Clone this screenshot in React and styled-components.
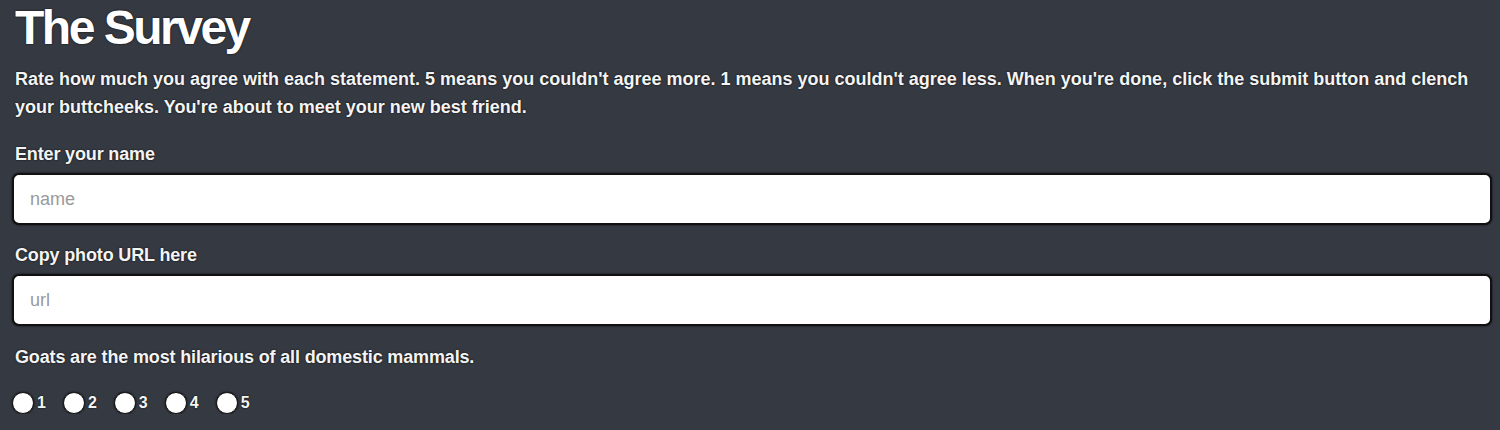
import React from 'react'
import styled, { createGlobalStyle } from 'styled-components'

const GlobalStyle = createGlobalStyle`
  html, body {
    margin: 0;
    padding: 0;
    background-color: #353941;
  }
  body {
    font-family: 'Liberation Sans', Arial, sans-serif;
    color: #f4f4f4;
  }
`

const Page = styled.main`
  padding: 0 8px 0 12px;
  text-shadow: 0 0 2px rgba(0, 0, 0, 0.9);
`

const Title = styled.h1`
  margin: 0;
  padding-left: 3px;
  font-size: 48px;
  line-height: 56px;
  font-weight: 700;
  letter-spacing: -2.5px;
  color: #fff;
`

const Intro = styled.p`
  margin: 9px 0 0;
  padding-left: 3px;
  font-size: 18px;
  line-height: 28px;
  font-weight: 700;
  letter-spacing: 0;
`

const Field = styled.div`
  display: flex;
  flex-direction: column;
  margin-top: ${({ $gap }) => $gap}px;
`

const Label = styled.label`
  padding-left: 3px;
  font-size: 18px;
  line-height: 24px;
  font-weight: 700;
  letter-spacing: -0.15px;
  margin-bottom: 7px;
`

const Input = styled.input`
  box-sizing: border-box;
  width: 100%;
  height: 52px;
  padding: 0 16px;
  border: 2px solid #111;
  border-radius: 7px;
  background: #fff;
  font-family: 'Liberation Sans', Arial, sans-serif;
  font-size: 18px;
  color: #333;
  box-shadow: 0 0 2px rgba(0, 0, 0, 0.8);

  &::placeholder {
    color: #9a9a9a;
  }
`

const Question = styled.p`
  margin: 19px 0 0;
  padding-left: 3px;
  font-size: 18px;
  line-height: 24px;
  font-weight: 700;
  letter-spacing: -0.15px;
`

const Options = styled.div`
  display: flex;
  align-items: center;
  gap: 17px;
  margin-top: 23px;
`

const Option = styled.label`
  display: flex;
  align-items: center;
  font-size: 16px;
  font-weight: 700;
`

const Radio = styled.input`
  appearance: none;
  width: 22px;
  height: 22px;
  margin: 0 3px 0 0;
  border-radius: 50%;
  background: #fff;
  border: 1px solid #111;
  box-shadow: 0 0 2px rgba(0, 0, 0, 0.9);
`

export default function App() {
  return (
    <>
      <GlobalStyle />
      <Page>
        <Title>The Survey</Title>
        <Intro>
          Rate how much you agree with each statement. 5 means you couldn't agree more. 1 means you couldn't agree less. When you're done, click the submit button and clench your buttcheeks. You're about to meet your new best friend.
        </Intro>
        <Field $gap={21}>
          <Label>Enter your name</Label>
          <Input placeholder="name" />
        </Field>
        <Field $gap={18}>
          <Label>Copy photo URL here</Label>
          <Input placeholder="url" />
        </Field>
        <Question>Goats are the most hilarious of all domestic mammals.</Question>
        <Options>
          {[1, 2, 3, 4, 5].map(n => (
            <Option key={n}>
              <Radio type="radio" name="q1" value={n} />
              {n}
            </Option>
          ))}
        </Options>
      </Page>
    </>
  )
}
